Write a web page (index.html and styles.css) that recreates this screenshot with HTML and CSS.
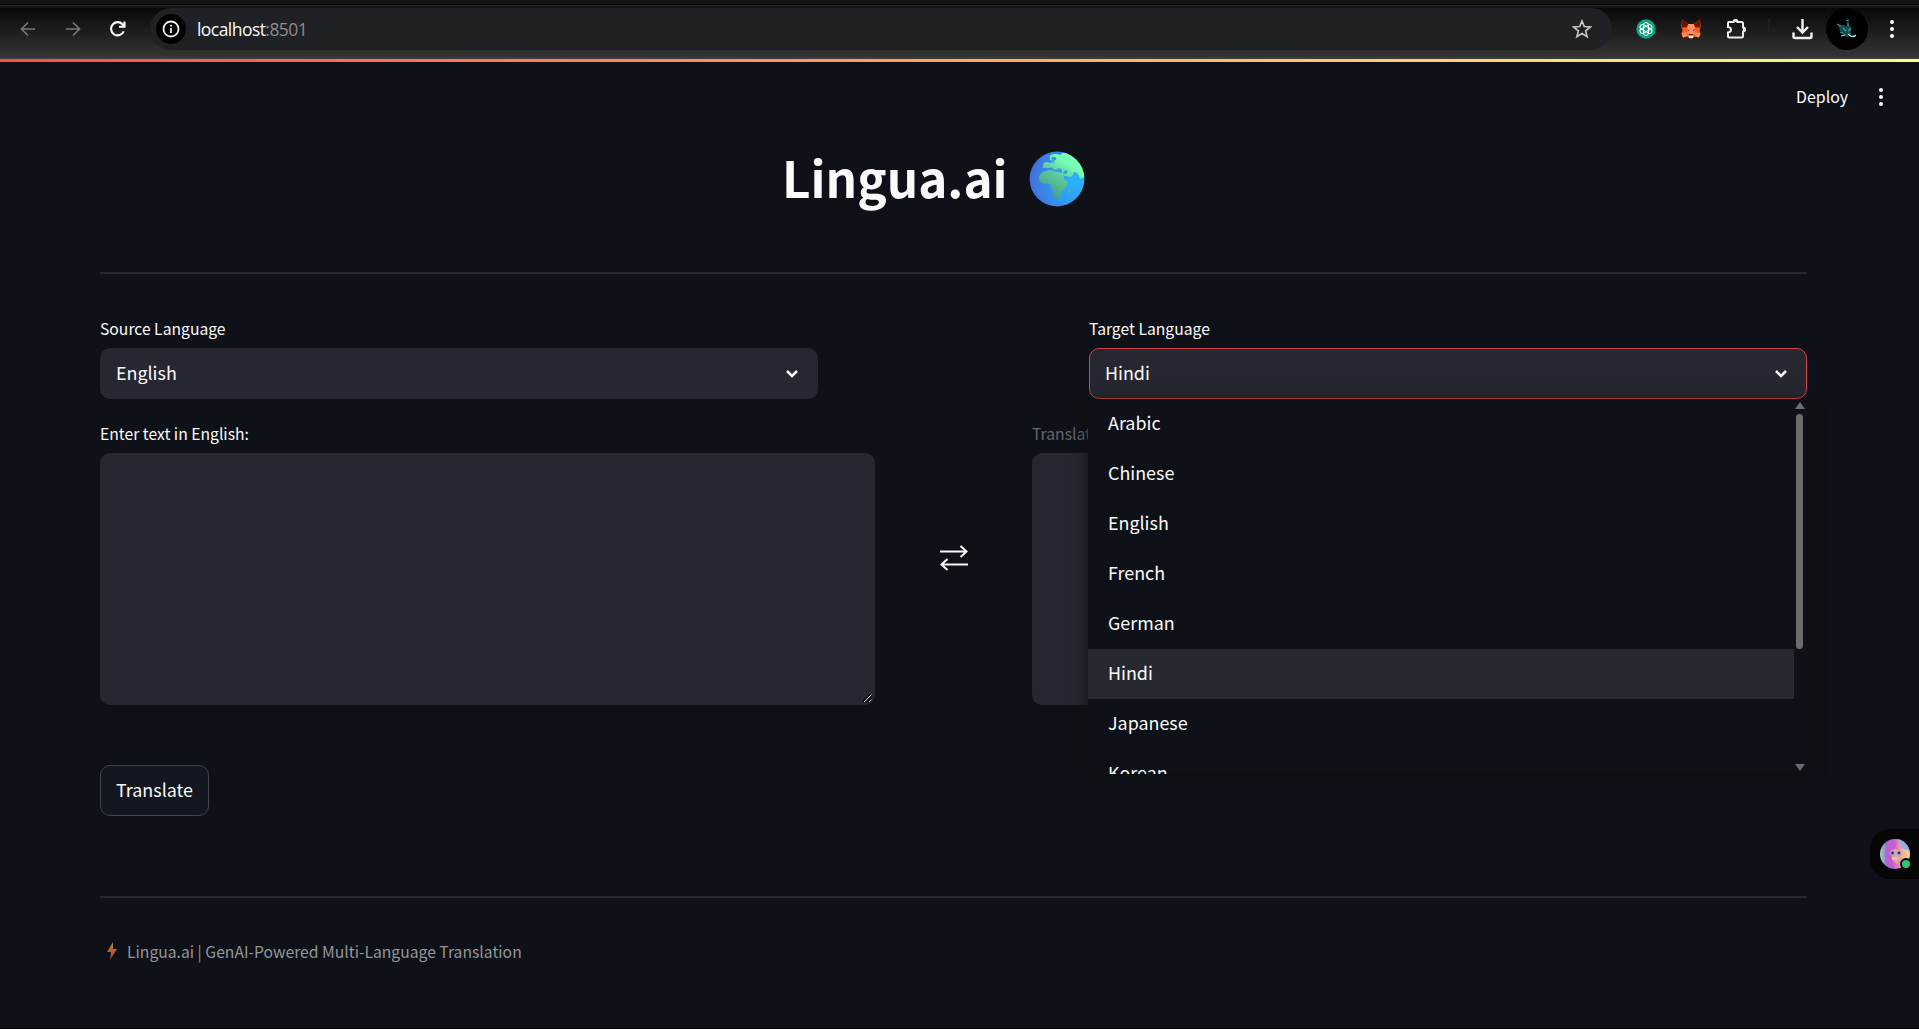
FILE: index.html
```html
<!DOCTYPE html>
<html lang="en">
<head>
<meta charset="utf-8">
<title>Lingua.ai</title>
<link rel="stylesheet" href="styles.css">
</head>
<body>
<header class="browser">
  <div class="nav">
    <svg width="16" height="16" viewBox="0 0 16 16" class="dim"><path d="M15 8H2M8 1.5L1.500 8L8 14.500"/></svg>
    <svg width="16" height="16" viewBox="0 0 16 16" class="dim"><path d="M1 8H14M8 1.500L14.500 8L8 14.500"/></svg>
    <svg width="16" height="16" viewBox="0 0 16 16" class="lit"><path d="M13.800 10.300A6.600 6.600 0 1 1 13 3.800L14.500 5.500M14.500 .5V5.800H9"/></svg>
  </div>
  <div class="address">
    <span class="info"><svg width="18" height="18" viewBox="0 0 18 18"><circle cx="9" cy="9" r="7.500"/><path d="M9 8v5M9 4.800v1.800"/></svg></span>
    <span class="url">localhost<span class="port">:8501</span></span>
    <svg class="star" width="20" height="20" viewBox="0 0 20 20"><path d="M10 2l2.300 5.500 6 .5-4.600 3.900 1.400 5.800L10 14.600l-5.100 3.100 1.400-5.800L1.700 8l6-.5z"/></svg>
  </div>
  <div class="tools">
    <svg width="20" height="20" viewBox="0 0 20 20"><circle cx="10" cy="10" r="9.700" fill="#10a37f"/><g fill="none" stroke="#fff" stroke-width="1"><rect id="petal" x="7.600" y="3.500" width="4.800" height="13" rx="2.400"/><use href="#petal" transform="rotate(60 10 10)"/><use href="#petal" transform="rotate(120 10 10)"/></g><circle cx="10" cy="10" r="1.500" fill="#10a37f"/></svg>
    <svg class="fox" width="20" height="20" viewBox="0 0 20 20"><path fill="#ff5c16" d="M1 .5l6.500 4.500h5L19 .5l.7 7-1.200 3.500 1 3.500-1.500 4-4.500-1-2 2h-3l-2-2-4.500 1-1.500-4 1-3.500L.3 7.500z"/><path fill="#661800" d="M1 .5l6.300 4.500L6 8.300 1 8.500zM19 .5L12.700 5 14 8.300l5 .2z"/><path fill="#ff8d5d" d="M7.300 5h5.400l1.500 5-.7 5h-7l-.7-5zM.5 14.500l5-1.500 1 4-4.500 1.500zM19.500 14.500l-5-1.500-1 4 4.500 1.500z"/><path fill="#3d1710" d="M5.700 10l2.200 1-.3 1.300zM14.300 10l-2.200 1 .3 1.300z"/><path fill="#e7ebf6" d="M8 16h4l.5 1.700-1.200 1.400H8.700l-1.200-1.400z"/><path fill="#38251f" d="M8.300 15h3.400l.3 1.600H8z"/></svg>
    <svg class="puzzle" width="21" height="22" viewBox="0 0 21 22"><path d="M3 4H7.500A2 2 0 0 1 11.500 4H15.500Q17 4 17 5.500V9.500A2 2 0 0 1 17 13.500V18Q17 19.500 15.500 19.500H3Q2 19.500 2 18.500V14.500Q5 14.200 5 11.800T2 9V5Q2 4 3 4Z"/><path class="solid" d="M7.500 4a2 2.300 0 0 1 4 0zM17 9.500a2.300 2 0 0 1 0 4z"/></svg>
    <i class="divider"></i>
    <svg class="download" width="21" height="21" viewBox="0 0 21 21"><path d="M10.500 0V13M5 8L10.500 13.500L16 8M1.500 13.500V17.500Q1.500 19 3 19H18Q19.500 19 19.500 17.500V13.500"/></svg>
    <span class="profile"><svg width="42" height="42" viewBox="0 0 42 42"><path d="M12 18l5-1 3 1 3-2 2 5 0 6-3 2-4-1-3-4z" fill="#174c50"/><path d="M11 16l4 2M20 13l3-1M22 14v4M14 24l3 1M25 20l-3 3M17 20l3 3" stroke="#31a5a2" stroke-width="1.200"/><path d="M15 28l4-1M22 26q3 4 8 1q-2 4-8-1" fill="#e8ffff" stroke="#e8ffff" stroke-width=".8"/></svg></span>
    <span class="dots"><i></i><i></i><i></i></span>
  </div>
</header>
<div class="decoration"></div>
<div class="app">
  <div class="toolbar"><span>Deploy</span><span class="dots"><i></i><i></i><i></i></span></div>
  <main>
    <h1><span>Lingua.ai</span>
      <svg width="56" height="56" viewBox="0 0 56 56">
        <defs>
          <radialGradient id="sea" cx=".85" cy=".55" r=".9"><stop offset="0" stop-color="#2bb5ff"/><stop offset=".5" stop-color="#3197ef"/><stop offset="1" stop-color="#4867d5"/></radialGradient>
          <linearGradient id="land" x1=".8" y1="0" x2=".2" y2="1"><stop offset=".25" stop-color="#77ffb5"/><stop offset=".55" stop-color="#5cc99b"/><stop offset="1" stop-color="#409985"/></linearGradient>
          <clipPath id="globe"><circle cx="28" cy="28" r="27.400"/></clipPath>
        </defs>
        <g clip-path="url(#globe)"><path fill="url(#sea)" d="M0 0h56v56H0z"/>
        <path fill="url(#land)" d="M22 4Q27 2 31 4Q34 1 38 1L50 5L56 18V26L51 28Q49 21 45 21Q44 26 40 26Q38 25 36 25Q33 24 33 21Q34 18 30 17Q27 20 24 18Q23 15 20 17H14Q13 12 17 11L22 12Q24 9 21 9Q20 5 22 4ZM17 20Q21 18 24 20L33 22L36 29L39 31Q38 37 33 40L30 47Q27 49 25 45L24 39Q21 38 22 33L14 32Q9 30 10 26Q12 21 17 20ZM40 38Q42 39 40 42L39 43Q38 40 40 38Z"/>
        <path fill="#3598f0" d="M23 6Q28 5 27 9Q23 9 26 12L22 11Q25 8 22 8ZM35 20Q39 18 38 22Q36 24 34 22Z"/></g>
      </svg>
    </h1>
    <hr>
    <section class="languages">
      <div class="field"><label>Source Language</label>
        <div class="select"><span>English</span><svg width="14" height="10" viewBox="0 0 14 10"><path d="M2 2L7 7L12 2"/></svg></div></div>
      <div class="field target"><label>Target Language</label>
        <div class="select open"><span>Hindi</span><svg width="14" height="10" viewBox="0 0 14 10"><path d="M2 2L7 7L12 2"/></svg></div>
        <div class="menu">
          <ul><li>Arabic</li><li>Chinese</li><li>English</li><li>French</li><li>German</li><li class="selected">Hindi</li><li>Japanese</li><li>Korean</li></ul>
          <div class="scroll"><i class="up"></i><i class="thumb"></i><i class="down"></i></div>
        </div></div>
    </section>
    <section class="texts">
      <div class="field"><label>Enter text in English:</label><div class="area"><svg class="grip" width="10" height="10" viewBox="0 0 10 10"><path class="shade" d="M0 8.500L8 .5M4 9.500L9 4.500"/><path d="M1 9L8.500 1.500M6 9L8.500 6.500"/></svg></div></div>
      <svg class="swap" width="30" height="28" viewBox="0 0 30 28"><path d="M1 7.500H27M21.500 2L27.500 7.500L21.500 13M29 20.500H3M8.500 15L2.500 20.500L8.500 26"/></svg>
      <div class="field"><label class="muted">Translation:</label><div class="area"></div></div>
    </section>
    <button>Translate</button>
    <hr class="bottom">
    <footer><svg width="10" height="18" viewBox="0 0 10 18"><defs><linearGradient id="bolt" x2="0" y2="1"><stop offset="0" stop-color="#b38a30"/><stop offset=".5" stop-color="#b06336"/><stop offset="1" stop-color="#a33143"/></linearGradient></defs><path fill="url(#bolt)" d="M6 0L0 10H4L3 18L10 7H6Z"/></svg><span>Lingua.ai | GenAI-Powered Multi-Language Translation</span></footer>
  </main>
  <div class="assistant"><div class="avatar"><svg width="30" height="30" viewBox="0 0 30 30"><defs><linearGradient id="face"><stop offset="0" stop-color="#9ed8bd"/><stop offset=".28" stop-color="#8b5bd6"/><stop offset=".52" stop-color="#d86dc8"/><stop offset=".75" stop-color="#f6b48c"/><stop offset="1" stop-color="#f3cf9d"/></linearGradient><clipPath id="round"><circle cx="15" cy="15" r="15"/></clipPath></defs><g clip-path="url(#round)"><path fill="url(#face)" d="M0 0h30v30H0z"/><path fill="#94aeea" d="M17 0q4 4 4 9l9 3V0z"/><path fill="#c95bd0" d="M8 3q5-3 9 1l-3 5q-5 3-4 12l3 9H9Q2 19 8 3z"/><path fill="#e3a09d" d="M11 12q4-4 10 0v7l-4 6-5-4z"/><circle cx="12.500" cy="14" r="2.500" fill="#8987bd" stroke="#bdb9e4" stroke-width=".7"/><circle cx="19" cy="14" r="2.300" fill="#8987bd" stroke="#bdb9e4" stroke-width=".7"/><circle cx="12.500" cy="14" r="1.200" fill="#26345a"/><circle cx="19" cy="14" r="1.200" fill="#26345a"/><path stroke="#fbc0a2" stroke-width="2" d="M12 19.500h7"/></g></svg><i class="online"></i></div></div>
</div>
</body>
</html>
```
FILE: styles.css
```css
* { box-sizing: border-box; }
body { margin: 0; width: 1919px; height: 1029px; overflow: hidden; background: #0e1117; color: #fafafa; font-family: "Noto Sans CJK JP", "Noto Sans CJK SC", sans-serif; font-size: 17.9px; }
svg { display: block; flex: none; fill: none; }
.browser { height: 59px; padding-top: 8px; display: flex; align-items: flex-start; background: linear-gradient(#151515 0 4px, #000 4px 5px, #242424 5px 6px, #080808 8px, #303030 52px, #323232 56px, #404040); }
.nav { width: 150px; height: 42px; padding-left: 20px; display: flex; align-items: center; gap: 29px; }
.dim { stroke: #777; stroke-width: 1.7; }
.lit { stroke: #fff; stroke-width: 2.1; }
.address { width: 1462px; height: 42px; border-radius: 21px; background: #202124; display: flex; align-items: center; padding: 0 20px 0 6px; }
.info { width: 30px; height: 30px; border-radius: 50%; background: #000; display: flex; align-items: center; justify-content: center; }
.info svg { stroke: #eee; stroke-width: 1.8; }
.url { margin-left: 11px; font: 17.5px/24px "Open Sans", sans-serif; letter-spacing: -.55px; }
.port { color: #8c8d90; }
.star { margin-left: auto; stroke: #c5c5c5; stroke-width: 1.7; }
.tools { height: 42px; display: flex; align-items: center; }
.tools > svg:first-child { margin-left: 24px; }
.fox { margin-left: 25px; }
.puzzle { margin-left: 25px; stroke: #eee; stroke-width: 2; }
.puzzle .solid { fill: #eee; stroke: none; }
.divider { width: 2px; height: 20px; margin-left: 21px; background: #202020; }
.download { margin-left: 22px; stroke: #f4f4f4; stroke-width: 2.4; }
.profile { width: 42px; height: 42px; border-radius: 50%; margin-left: 13px; background: #000; }
.dots { display: flex; flex-direction: column; gap: 3px; }
.dots i { width: 4px; height: 4px; border-radius: 50%; background: #fafafa; }
.tools .dots { margin-left: 22px; }
.decoration { height: 3px; background: linear-gradient(90deg, #ff4b4b, #fffd80); }
.app { position: relative; height: 967px; border-bottom: 1px solid #000; }
.toolbar { height: 70px; padding: 0 36px 1px 0; display: flex; justify-content: flex-end; align-items: center; gap: 31px; font-size: 15.9px; }
main { width: 1707px; margin-left: 100px; }
h1 { margin: 0; height: 140px; padding: 14px 0 0 682px; display: flex; align-items: flex-start; font-size: 49.4px; line-height: 62px; font-weight: 700; }
h1 span { width: 247px; white-space: nowrap; }
h1 svg { margin-top: 5px; }
hr { margin: 0; border: 0; height: 2px; background: #26272b; }
.languages { display: flex; justify-content: space-between; margin-top: 42px; }
.languages .field { width: 718px; }
.field label { display: block; height: 32px; line-height: 26px; font-size: 15.7px; }
.field .muted { color: #66676c; }
.select { height: 51px; border-radius: 10px; background: #262730; display: flex; align-items: center; justify-content: space-between; padding: 0 19px 0 16px; line-height: 24px; }
.select span { padding-bottom: 4px; }
.select svg { stroke: #fafafa; stroke-width: 2.6; }
.open { border: 1px solid #d64449; padding: 0 18px 0 15px; }
.target { position: relative; }
.menu { position: absolute; z-index: 2; left: -1px; top: 83px; width: 719px; height: 375px; display: flex; background: #0e1117; box-shadow: 0 4px 14px rgba(16,16,16,.85); }
.menu ul { width: 706px; margin: 0; padding: 0; list-style: none; overflow: hidden; }
.menu li { height: 50px; padding-left: 20px; line-height: 46px; }
.menu .selected { background: #262930; }
.scroll { width: 13px; padding: 3px 2px 3px 0; display: flex; flex-direction: column; align-items: center; }
.up { border: 5px solid transparent; border-top: 0; border-bottom: 7px solid #6b6c6f; }
.thumb { width: 7px; height: 235px; margin-top: 5px; border-radius: 4px; background: #6b6c6f; }
.down { margin-top: auto; border: 5px solid transparent; border-bottom: 0; border-top: 7px solid #6b6c6f; }
.texts { display: flex; justify-content: space-between; margin-top: 22px; }
.texts .field { width: 775px; }
.area { height: 252px; border-radius: 10px; background: #262730; display: flex; align-items: flex-end; justify-content: flex-end; padding: 2px; }
.grip { stroke: #d7d7da; stroke-width: 1; }
.grip .shade { stroke: #08090d; stroke-width: 2; }
.swap { margin-top: 123px; stroke: #fafafa; stroke-width: 2; }
button { display: block; width: 109px; height: 51px; margin: 60px 0 0; padding: 0 0 3px; border: 1px solid #41444c; border-radius: 10px; background: #131720; color: #fafafa; font: 17.9px/24px "Noto Sans CJK JP", sans-serif; }
.bottom { margin-top: 80px; }
footer { height: 24px; margin-top: 41px; padding-left: 7px; display: flex; align-items: center; gap: 10px; font-size: 15.7px; line-height: 24px; color: #94969a; }
footer span { padding-top: 2px; }
.assistant { position: absolute; right: 0; top: 767px; width: 49px; height: 50px; padding: 10px; border-radius: 20px 0 0 20px; background: #060607; }
.avatar { position: relative; width: 30px; height: 30px; }
.online { position: absolute; left: 20px; top: 19px; width: 12px; height: 12px; border: 2px solid #060607; border-radius: 50%; background: #24c875; }
```
